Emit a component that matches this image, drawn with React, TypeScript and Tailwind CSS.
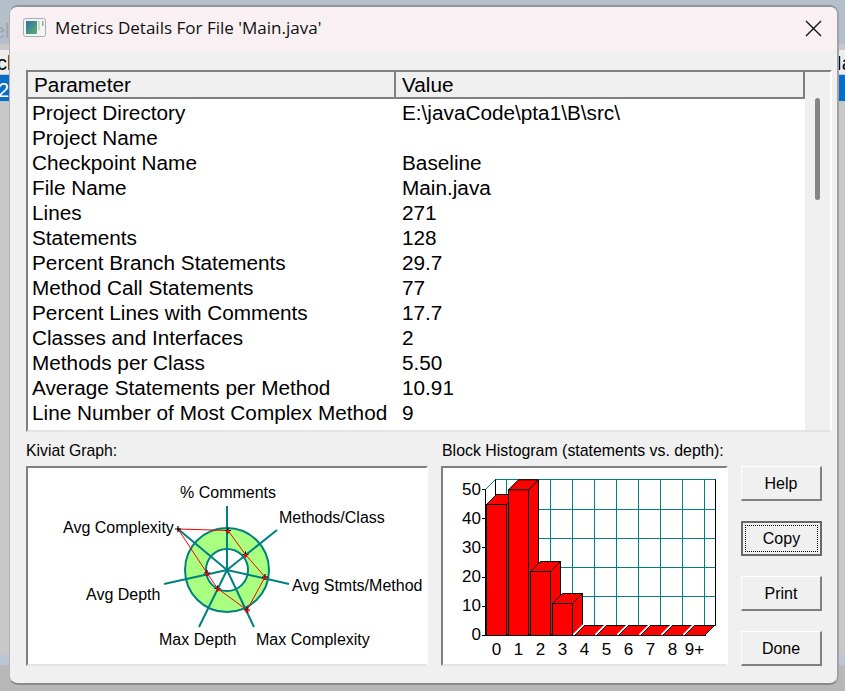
const rows = [
  ["Project Directory", "E:\\javaCode\\pta1\\B\\src\\"],
  ["Project Name", ""],
  ["Checkpoint Name", "Baseline"],
  ["File Name", "Main.java"],
  ["Lines", "271"],
  ["Statements", "128"],
  ["Percent Branch Statements", "29.7"],
  ["Method Call Statements", "77"],
  ["Percent Lines with Comments", "17.7"],
  ["Classes and Interfaces", "2"],
  ["Methods per Class", "5.50"],
  ["Average Statements per Method", "10.91"],
  ["Line Number of Most Complex Method", "9"],
];

const spokes = [
  [227, 506],
  [277, 530],
  [289, 584],
  [254, 627],
  [199, 627],
  [164, 584],
  [178, 529],
];

const marks = [
  [228, 530.5],
  [245.5, 554.5],
  [265, 577],
  [247, 610],
  [217.5, 588.5],
  [207, 573],
  [178, 529],
];

const kiviatLabels = [
  { text: "% Comments", x: 180, y: 498 },
  { text: "Methods/Class", x: 279, y: 523 },
  { text: "Avg Complexity", x: 63, y: 533 },
  { text: "Avg Stmts/Method", x: 292, y: 591 },
  { text: "Avg Depth", x: 86, y: 600 },
  { text: "Max Depth", x: 159, y: 645 },
  { text: "Max Complexity", x: 256, y: 645 },
];

function KiviatGraph() {
  // coordinates in the svg are page coordinates, the viewBox shifts them to the box
  return (
    <svg viewBox="28 468 399 196" width={399} height={196} className="block">
      <circle cx={227} cy={570} r={31.5} fill="none" stroke="#a8ff80" strokeWidth={21} />
      <circle cx={227} cy={570} r={42} fill="none" stroke="#008080" strokeWidth={2} />
      <circle cx={227} cy={570} r={21} fill="none" stroke="#008080" strokeWidth={2} />
      {spokes.map(([x, y]) => (
        <line key={x} x1={227} y1={570} x2={x} y2={y} stroke="#008080" strokeWidth={2} />
      ))}
      <polygon points={marks.map((m) => m.join(",")).join(" ")} fill="none" stroke="#ff0000" strokeWidth={1} />
      {marks.map(([x, y], i) => (
        <g key={x}>
          <path d={`M${x - 3} ${y}H${x + 3}M${x} ${y - 3}V${y + 3}`} stroke="#000" strokeWidth={1.2} />
          {i < 6 && <rect x={x - 1.5} y={y - 0.5} width={3} height={3} fill="#ff0000" />}
        </g>
      ))}
      {kiviatLabels.map((l) => (
        <text key={l.text} x={l.x} y={l.y} fontSize={16} fill="#000" fontFamily="'Liberation Sans', sans-serif">
          {l.text}
        </text>
      ))}
    </svg>
  );
}

const barHeights = [131, 145.7, 64, 32, 0, 0, 0, 0, 0, 0];
const xLabels = ["0", "1", "2", "3", "4", "5", "6", "7", "8", "9+"];
const yLabels = ["50", "40", "30", "20", "10", "0"];
const gridX = [506.5, 528.5, 550.5, 572.5, 594.5, 616.5, 638.5, 660.5, 682.5, 704.5];
const gridY = [509.5, 538.5, 567.5, 596.5];

function Histogram() {
  return (
    <svg viewBox="443 468 283 196" width={283} height={196} className="block">
      <rect x={495.5} y={479.5} width={220} height={146} fill="#fff" stroke="#008080" />
      {gridX.map((x) => (
        <line key={x} x1={x} y1={479.5} x2={x} y2={625.5} stroke="#008080" />
      ))}
      {gridY.map((y) => (
        <line key={y} x1={495.5} y1={y} x2={715.5} y2={y} stroke="#008080" />
      ))}
      <line x1={485.5} y1={489.5} x2={495.5} y2={479.5} stroke="#008080" />
      <line x1={495.5} y1={479.5} x2={495.5} y2={500} stroke="#000" />
      <line x1={715.5} y1={479.5} x2={715.5} y2={625.5} stroke="#000" />
      <line x1={485.5} y1={489.5} x2={485.5} y2={635.5} stroke="#000" />
      <line x1={482} y1={635.5} x2={706} y2={635.5} stroke="#000" />
      {[489.5, 518.5, 547.5, 577.5, 606.5].map((y) => (
        <line key={y} x1={482} y1={y} x2={486} y2={y} stroke="#000" />
      ))}
      {barHeights.map((h, i) => {
        const x = 486.5 + 22 * i;
        const top = 635.5 - h;
        return (
          <g key={i} fill="#ff0000" stroke="#000">
            {h === 0 && <line x1={x - 1} y1={635} x2={x + 9} y2={625} stroke="#fff" strokeWidth={2} />}
            {h > 0 && <path d={`M${x + 20} ${top}l10 -10v${h}l-10 10z`} />}
            <path d={`M${x} ${top}l10 -10h20l-10 10z`} />
            {h > 0 && <rect x={x} y={top} width={20} height={h} />}
          </g>
        );
      })}
      {yLabels.map((t, i) => (
        <text
          key={t}
          x={481}
          y={494.5 + 29.1 * i}
          textAnchor="end"
          fontSize={17}
          fill="#000"
          fontFamily="'Liberation Sans', sans-serif"
        >
          {t}
        </text>
      ))}
      {xLabels.map((t, i) => (
        <text
          key={t}
          x={496.5 + 22 * i}
          y={654.5}
          textAnchor="middle"
          fontSize={17}
          fill="#000"
          fontFamily="'Liberation Sans', sans-serif"
        >
          {t}
        </text>
      ))}
    </svg>
  );
}

function DialogButton({ label, focused }: { label: string; focused?: boolean }) {
  return (
    <button
      className={
        focused
          ? "flex h-[35px] w-[81px] items-center justify-center border-2 border-[#696969] bg-[#f0f0f0] p-[2px] text-[16px] text-black"
          : "flex h-[35px] w-[81px] items-center justify-center border border-t-[#ffffff] border-l-[#ffffff] border-r-2 border-b-2 border-r-[#808080] border-b-[#808080] bg-[#f0f0f0] pt-[2px] text-[16px] text-black"
      }
    >
      {focused ? (
        <span className="flex h-full w-full items-center justify-center border border-dotted border-black pt-[1px]">
          {label}
        </span>
      ) : (
        label
      )}
    </button>
  );
}

function AppIcon() {
  return (
    <svg width={24} height={20} viewBox="0 0 24 20" className="block">
      <defs>
        <linearGradient id="ico" x1="0" y1="0" x2="1" y2="1">
          <stop offset="0" stopColor="#2f6fa8" />
          <stop offset="1" stopColor="#5bb36a" />
        </linearGradient>
      </defs>
      <rect x={0.5} y={0.5} width={22} height={18} rx={2} fill="#f4f4f4" stroke="#a8aeb0" />
      <rect x={3} y={3} width={11} height={13} fill="url(#ico)" />
      <rect x={15} y={3} width={2} height={9} fill="#c8d8cc" />
      <rect x={19} y={3} width={1.5} height={5} fill="#9aa8a0" />
    </svg>
  );
}

export default function App() {
  return (
    <div
      className="relative h-[691px] w-[845px] overflow-hidden bg-[#c8c8c8] pt-[5px] pl-[9px]"
      style={{ fontFamily: "'Liberation Sans', Arial, sans-serif" }}
    >
      {/* blurred window behind the dialog */}
      <div className="absolute top-0 left-0 h-[44px] w-full bg-[#b4bfca]" />
      <div className="absolute top-[16px] left-[-6px] text-[20px] text-[#9aa4ae]">el</div>
      <div className="absolute top-[50px] left-0 h-[24px] w-full bg-[#ececec] text-[20px] text-black">
        <span className="absolute top-[-2px] left-[-3px]">cl</span>
        <span className="absolute top-[-2px] left-[825px]">Ma</span>
      </div>
      <div className="absolute top-[75px] left-0 h-[26px] w-full bg-[#0a6cc4] text-[20px] text-white">
        <span className="absolute top-0 left-[-2px]">2</span>
      </div>
      <div className="absolute top-[655px] left-0 h-[10px] w-full bg-[#bac6d6]" />
      <div className="absolute top-[665px] left-0 h-[26px] w-full bg-[#b8b8b8]" />

      <div className="relative flex h-[680px] w-[830px] flex-col overflow-hidden rounded-[9px] border-t-2 border-r-2 border-b-2 border-l border-t-[#8f959c] border-r-[#a2a2a2] border-b-[#8a8a8a] border-l-[#b0b0b0] bg-[#f0f0f0]">
        <div className="flex h-[44px] shrink-0 items-center bg-[#f8f0f2] pb-[2px] pl-[13px]">
          <AppIcon />
          <span
            className="ml-[8px] text-[17.05px] text-[#111]"
            style={{ fontFamily: "'Open Sans', sans-serif" }}
          >
            Metrics Details For File 'Main.java'
          </span>
          <svg width={17} height={17} viewBox="0 0 17 17" className="mr-[15px] ml-auto block">
            <path d="M1 1l15 15M16 1L1 16" stroke="#111" strokeWidth={1.4} fill="none" />
          </svg>
        </div>

        <div className="flex flex-1 flex-col px-[16px] pt-[19px]">
          <div className="flex h-[362px] w-[806px] border-2 border-t-[#808080] border-l-[#808080] border-r-[#ffffff] border-b-[#e4e4e4]">
            <div className="flex w-[777px] flex-col bg-white">
              <div className="flex h-[27px] shrink-0 bg-[#f0f0f0] text-[20.75px] leading-[25px] text-black">
                <div className="w-[368px] border-r-2 border-b-2 border-[#808080] pl-[6px]">Parameter</div>
                <div className="flex-1 border-r-2 border-b-2 border-[#808080] pl-[6px]">Value</div>
              </div>
              <div className="flex flex-col overflow-hidden pt-[1px] text-[20.75px] text-black">
                {rows.map(([name, value]) => (
                  <div key={name} className="flex h-[25px] shrink-0 items-center leading-[25px]">
                    <div className="w-[374px] shrink-0 pl-[4px] whitespace-nowrap">{name}</div>
                    <div className="whitespace-nowrap">{value}</div>
                  </div>
                ))}
              </div>
            </div>
            <div className="relative flex-1 bg-[#f0f0f0]">
              <div className="absolute top-[26px] left-[10px] h-[102px] w-[5px] rounded-full bg-[#858585]" />
            </div>
          </div>

          <div className="mt-[9px] flex">
            <div className="w-[402px] shrink-0">
              <div className="h-[25px] text-[15.75px] leading-[20px] text-black">Kiviat Graph:</div>
              <div className="h-[200px] border-2 border-t-[#808080] border-l-[#808080] border-r-[#ffffff] border-b-[#e4e4e4] bg-white">
                <KiviatGraph />
              </div>
            </div>
            <div className="ml-[13px] w-[287px] shrink-0">
              <div className="h-[25px] pl-[1px] text-[15.9px] leading-[20px] whitespace-nowrap text-black">
                Block Histogram (statements vs. depth):
              </div>
              <div className="h-[200px] border-2 border-t-[#808080] border-l-[#808080] border-r-[#ffffff] border-b-[#e4e4e4] bg-white">
                <Histogram />
              </div>
            </div>
            <div className="ml-[13px] flex flex-col gap-[20px] pt-[25px]">
              <DialogButton label="Help" />
              <DialogButton label="Copy" focused />
              <DialogButton label="Print" />
              <DialogButton label="Done" />
            </div>
          </div>
        </div>
      </div>
    </div>
  );
}
